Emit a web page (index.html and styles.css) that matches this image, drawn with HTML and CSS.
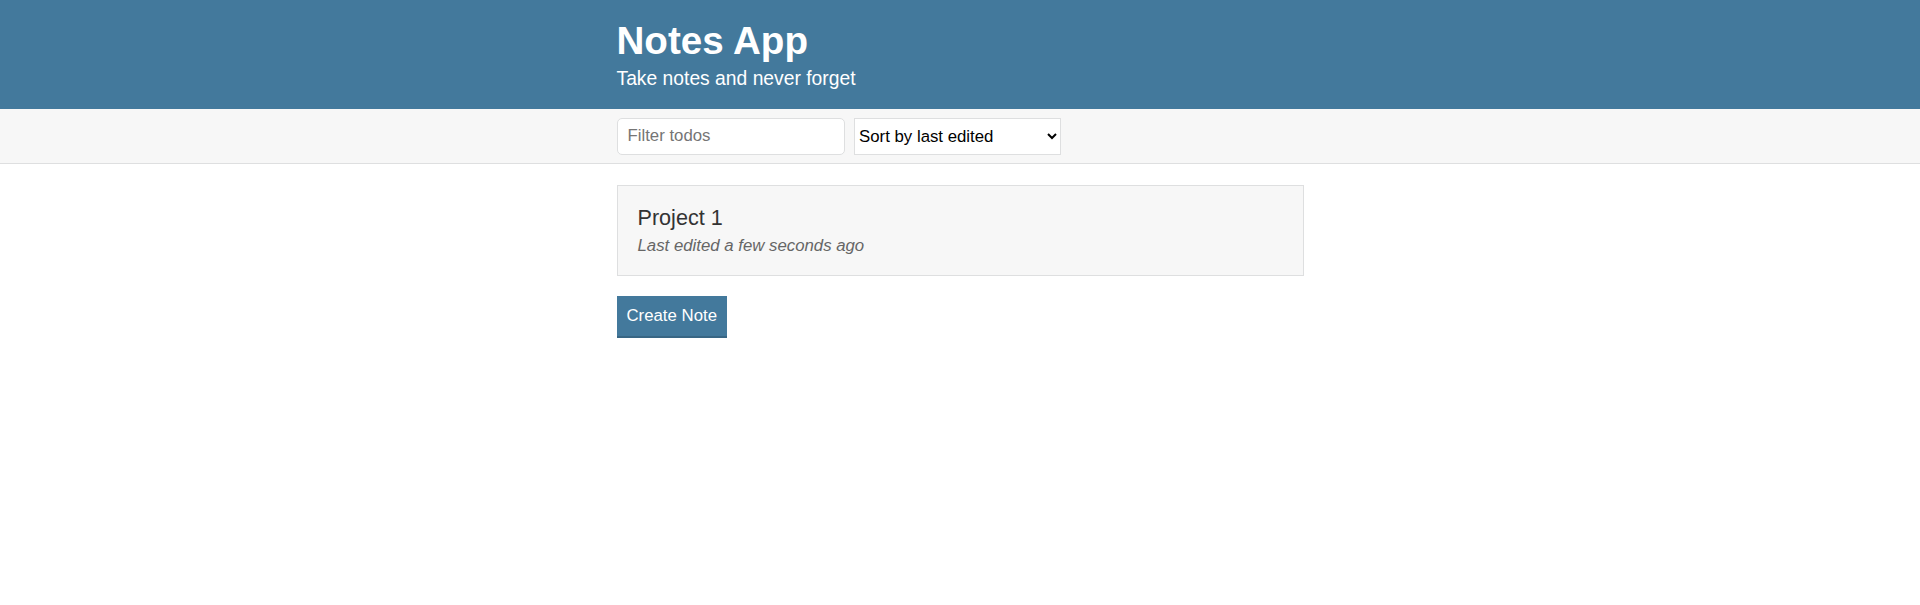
FILE: index.html
```html
<!DOCTYPE html>
<html lang="en">
<head>
<meta charset="utf-8">
<title>Notes App</title>
<link rel="stylesheet" href="styles.css">
</head>
<body>
<header class="header">
  <div class="container">
    <h1 class="header__title">Notes App</h1>
    <p class="header__subtitle">Take notes and never forget</p>
  </div>
</header>
<div class="actions">
  <div class="container actions__container">
    <input class="input" type="text" placeholder="Filter todos">
    <select class="dropdown">
      <option>Sort by last edited</option>
      <option>Sort by recently created</option>
      <option>Sort alphabetically</option>
    </select>
  </div>
</div>
<main class="container">
  <a class="list-item" href="#">
    <p class="list-item__title">Project 1</p>
    <p class="list-item__subtitle">Last edited a few seconds ago</p>
  </a>
  <button class="button">Create Note</button>
</main>
</body>
</html>
```
FILE: styles.css
```css
* {
  box-sizing: border-box;
}

body {
  margin: 0;
  color: #333333;
  font-family: "Liberation Sans", Arial, Helvetica, sans-serif;
  font-size: 19.2px;
  background: #ffffff;
}

.container {
  width: 687px;
  margin: 0 auto;
}

.header {
  background: #43799c;
  color: #ffffff;
  padding: 19.2px 0;
}

.header__title {
  font-size: 38.6px;
  font-weight: bold;
  margin: 0 0 4.8px;
  line-height: normal;
}

.header__subtitle {
  font-size: 19.3px;
  font-weight: 300;
  margin: 0;
}

.actions {
  background: #f7f7f7;
  border-bottom: 1px solid #dedfe0;
}

.actions__container {
  display: flex;
  align-items: center;
  min-height: 54px;
}

.input {
  width: 228px;
  height: 37px;
  border: 1px solid #dedfe0;
  border-radius: 5px;
  padding: 4.8px 10px;
  font-family: inherit;
  font-size: 16.8px;
  font-weight: 300;
  margin-right: 9.6px;
  background: #ffffff;
  color: #333333;
}

.input::placeholder {
  color: #757575;
}

.dropdown {
  width: 207px;
  height: 37px;
  border: 1px solid #dedfe0;
  border-radius: 0;
  padding: 0;
  font-family: inherit;
  font-size: 16.8px;
  background: #ffffff;
  color: #000000;
}

.list-item {
  display: block;
  background: #f7f7f7;
  border: 1px solid #dedfe0;
  color: #333333;
  text-decoration: none;
  margin: 21px 0 19.2px;
  padding: 19.2px 20px;
}

.list-item__title {
  font-size: 21.6px;
  margin: 0 0 4.8px;
}

.list-item__subtitle {
  color: #666666;
  font-size: 16.8px;
  font-weight: 300;
  font-style: italic;
  margin: 0;
}

.button {
  background: #43799c;
  border: none;
  border-bottom: 2.4px solid #386684;
  color: #ffffff;
  font-family: inherit;
  font-size: 16.8px;
  font-weight: 300;
  padding: 10px 10px;
  cursor: pointer;
}
```
